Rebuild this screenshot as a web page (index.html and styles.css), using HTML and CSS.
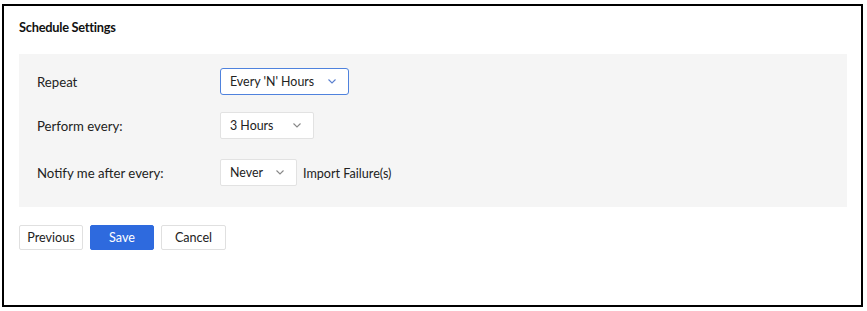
FILE: index.html
```html
<!DOCTYPE html>
<html lang="en">
<head>
    <meta charset="UTF-8">
    <title>Schedule Settings</title>
    <link rel="stylesheet" href="styles.css">
</head>
<body>
    <div class="frame">
        <h3 class="title">Schedule Settings</h3>

        <div class="panel">
            <div class="row">
                <div class="label">Repeat</div>
                <div class="select select-active" style="width: 129px;">
                    <span>Every 'N' Hours</span>
                    <svg class="chevron" width="8" height="5" viewBox="0 0 8 5"><path d="M0.5 0.5 L4 4 L7.5 0.5" fill="none" stroke="currentColor" stroke-width="1.1"/></svg>
                </div>
            </div>

            <div class="row row-second">
                <div class="label">Perform every:</div>
                <div class="select" style="width: 94px;">
                    <span>3 Hours</span>
                    <svg class="chevron" width="8" height="5" viewBox="0 0 8 5"><path d="M0.5 0.5 L4 4 L7.5 0.5" fill="none" stroke="currentColor" stroke-width="1.1"/></svg>
                </div>
            </div>

            <div class="row row-third">
                <div class="label">Notify me after every:</div>
                <div class="select" style="width: 77px;">
                    <span>Never</span>
                    <svg class="chevron" width="8" height="5" viewBox="0 0 8 5"><path d="M0.5 0.5 L4 4 L7.5 0.5" fill="none" stroke="currentColor" stroke-width="1.1"/></svg>
                </div>
                <span class="suffix">Import Failure(s)</span>
            </div>
        </div>

        <div class="actions">
            <button class="btn" style="width: 64px;">Previous</button>
            <button class="btn btn-primary" style="width: 64px;">Save</button>
            <button class="btn" style="width: 65px;">Cancel</button>
        </div>
    </div>
</body>
</html>
```

FILE: styles.css
```css
body {
    margin: 4px 4px 4px 2px;
    font-family: Lato, "Open Sans", sans-serif;
    font-size: 13px;
    color: #222;
    background: #fff;
}

.frame {
    border: 2px solid #000;
    box-sizing: border-box;
    height: 303px;
    padding: 0 14px 0 15px;
}

.title {
    margin: 0;
    padding-top: 12px;
    height: 36px;
    font-size: 12.8px;
    font-weight: 700;
    letter-spacing: -0.25px;
    color: #111;
    line-height: 18px;
}

.panel {
    background: #f5f5f5;
    padding: 14px 18px 21px 18px;
}

.row {
    display: flex;
    align-items: center;
}

.row-second {
    margin-top: 17px;
}

.row-third {
    margin-top: 20px;
}

.label {
    width: 183px;
    font-size: 13.2px;
    color: #222;
}

.select {
    box-sizing: border-box;
    height: 27px;
    display: flex;
    align-items: center;
    justify-content: space-between;
    padding: 0 12px 0 9px;
    background: #fff;
    border: 1px solid #e2e2e2;
    border-radius: 2px;
    font-size: 12.4px;
    color: #222;
}

.select .chevron {
    color: #888;
}

.select-active {
    border-color: #4f82dd;
    border-radius: 3px;
}

.select-active .chevron {
    color: #5a7fcf;
}

.suffix {
    margin-left: 6px;
    padding-top: 2px;
    font-size: 12.6px;
}

.actions {
    display: flex;
    gap: 7px;
    margin-top: 18px;
}

.btn {
    box-sizing: border-box;
    height: 25px;
    padding: 0;
    font-family: Lato, "Open Sans", sans-serif;
    font-size: 12.6px;
    color: #222;
    background: #fff;
    border: 1px solid #e0e0e0;
    border-radius: 2px;
    cursor: pointer;
}

.btn-primary {
    background: #2e6ade;
    border-color: #2e6ade;
    color: #fff;
}
```
